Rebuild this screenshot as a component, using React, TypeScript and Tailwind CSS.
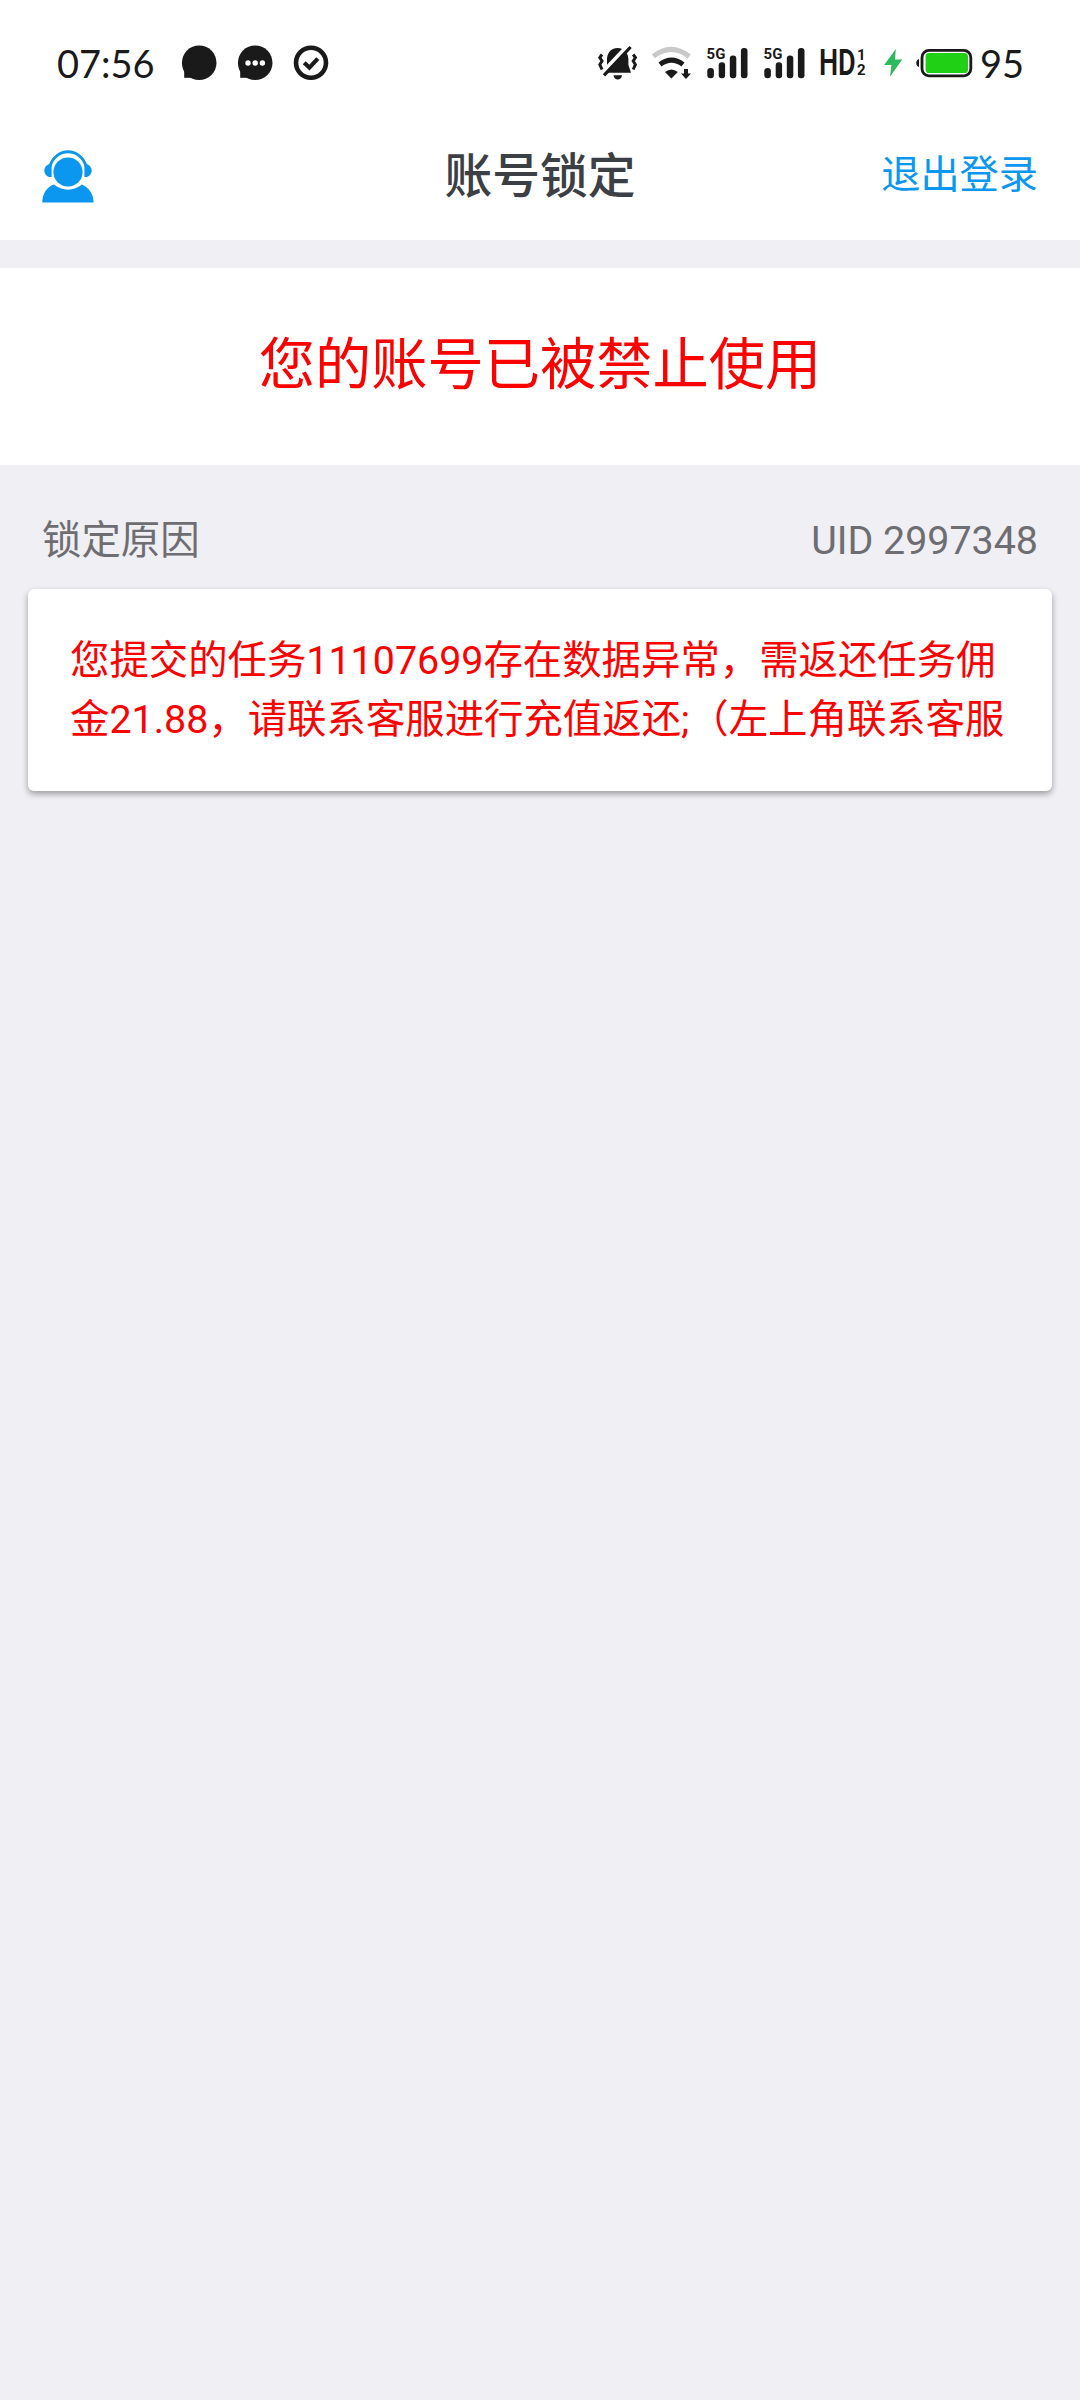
import type { ReactNode } from "react";

interface GlyphProps {
  viewBox: string;
  className: string;
  children: ReactNode;
}

function Glyph({ viewBox, className, children }: GlyphProps) {
  return (
    <svg viewBox={viewBox} className={`shrink-0 ${className}`} fill="#1a1a1a">
      {children}
    </svg>
  );
}

function Bubble() {
  return (
    <>
      <circle cx="18.2" cy="18.8" r="17.3" />
      <rect x="3.2" y="19" width="15" height="14.8" />
    </>
  );
}

function Signal() {
  return (
    <Glyph viewBox="0 0 45 38" className="w-[45px] h-[38px]">
      <text x="1.6" y="15" className="font-[Roboto,sans-serif] text-[15px] font-bold">
        5G
      </text>
      <rect x="2.3" y="24" width="6.6" height="10.3" rx="3.2" />
      <rect x="13.7" y="18.2" width="6.4" height="16.1" rx="3" />
      <rect x="24.8" y="11.4" width="6.5" height="22.9" rx="3" />
      <rect x="35.9" y="4" width="6.6" height="30.3" rx="3" />
    </Glyph>
  );
}

function HdBadge() {
  return (
    <div className="flex w-[49px] items-center font-[Roboto,sans-serif]">
      <div className="w-[38px]">
        <span className="inline-block origin-left scale-x-[0.73] text-[37px] font-semibold leading-[38px]">HD</span>
      </div>
      <div className="flex flex-col text-[15px] font-bold leading-[15px]">
        <span>1</span>
        <span>2</span>
      </div>
    </div>
  );
}

function StatusBar() {
  return (
    <div className="flex h-[126px] items-center justify-between pl-[57px] pr-[56px] font-[Lato,sans-serif] text-[#1a1a1a]">
      <div className="flex items-center">
        <span className="w-[124px] whitespace-nowrap text-[38px] leading-none">07:56</span>
        <div className="flex items-center gap-[18px]">
          <Glyph viewBox="0 0 38 38" className="w-[38px] h-[38px]">
            <Bubble />
          </Glyph>
          <Glyph viewBox="0 0 38 38" className="w-[38px] h-[38px]">
            <Bubble />
            <circle cx="11" cy="19" r="2.7" fill="#fff" />
            <circle cx="18.2" cy="19" r="2.7" fill="#fff" />
            <circle cx="25.4" cy="19" r="2.7" fill="#fff" />
          </Glyph>
          <Glyph viewBox="0 0 38 38" className="w-[38px] h-[38px]">
            <circle cx="18" cy="18.8" r="15" fill="none" stroke="#1a1a1a" strokeWidth="4.6" />
            <path d="M11.2 18.8L16.4 23.6L24.8 14.6" fill="none" stroke="#1a1a1a" strokeWidth="4.2" />
          </Glyph>
        </div>
      </div>

      <div className="flex items-center">
        <div className="flex items-center gap-3">
          <Glyph viewBox="0 0 42 38" className="w-[42px] h-[38px]">
            <path d="M20.6 4C13.6 4 10 9.4 10 15.5V21L7 28.8H34L31.4 21V15.5C31.4 9.4 27.6 4 20.6 4Z" />
            <path d="M16.5 31.2H25C24.4 37 17.1 37 16.5 31.2Z" />
            <path d="M3.4 30.6L31.4 1" stroke="#fff" strokeWidth="4" />
            <path d="M7 31.4L33.6 3" stroke="#1a1a1a" strokeWidth="3.2" />
            <path
              d="M5 10.5L2.8 13.5L5 17L2.8 20.5L5 25.5M36.2 10.5L38.4 13.5L36.2 17L38.4 20.5L36.2 25.5"
              fill="none"
              stroke="#1a1a1a"
              strokeWidth="3"
            />
          </Glyph>
          <Glyph viewBox="0 0 42 38" className="w-[42px] h-[38px]">
            <path d="M2.4 12.4Q20 -1.6 38.2 12.4" fill="none" stroke="#c9c9c9" strokeWidth="5" />
            <path d="M9 20.4Q20.5 11.8 32 20.4" fill="none" stroke="#1a1a1a" strokeWidth="5" />
            <path d="M14 28Q20.5 23 26.8 28L20.4 34.6Z" />
            <path d="M33 25H37V29.6H40L35 35L30 29.6H33Z" />
          </Glyph>
          <Signal />
          <Signal />
          <HdBadge />
        </div>
        <Glyph viewBox="0 0 22 38" className="ml-[14px] w-[22px] h-[38px]">
          <path d="M13.8 5L2.2 21H9.4L8 32.8L20.2 15.4H13Z" fill="#2dbb5e" />
        </Glyph>
        <Glyph viewBox="0 0 59 38" className="ml-[11px] w-[59px] h-[38px]">
          <path d="M4 15V23C0.3 22 0.3 16 4 15Z" />
          <rect x="7" y="6.4" width="48.8" height="25.4" rx="7" fill="none" stroke="#1a1a1a" strokeWidth="2.8" />
          <rect x="10.6" y="9" width="42.4" height="20" rx="3.6" fill="#20d014" />
        </Glyph>
        <span className="ml-[6px] w-[44px] whitespace-nowrap text-[38px] leading-none">95</span>
      </div>
    </div>
  );
}

function SupportIcon() {
  return (
    <svg viewBox="0 0 52 54" className="h-[54px] w-[52px]" fill="#0b96ef">
      <circle cx="26" cy="22" r="14.6" />
      <path d="M0.3 52.4C0.3 44 5 36.8 12 34.6C20 41.4 32 41.4 39.8 34.6C46.4 37.2 51.6 44 51.6 52.4Z" />
      <path d="M8 16C14 -3 38 -3 44 16" fill="none" stroke="#0b96ef" strokeWidth="2.8" />
      <path d="M9.6 12.6V27H7.4C4.6 26.2 2.3 23.6 2.3 20.4C2.3 17.4 4.8 14.8 6.4 14.4Z" />
      <path d="M42.4 12.6V27H44.6C47.4 26.2 49.7 23.6 49.7 20.4C49.7 17.4 47.2 14.8 45.6 14.4Z" />
    </svg>
  );
}

function Header() {
  return (
    <header className="grid h-[114px] grid-cols-3 items-center px-[42px] pb-[13px]">
      <button aria-label="客服" className="justify-self-start">
        <SupportIcon />
      </button>
      <h1 className="justify-self-center pt-0.5 text-[47.8px] font-medium leading-none text-[#3c4045]">
        账号锁定
      </h1>
      <button className="justify-self-end pb-0.5 text-[39.2px] leading-none text-[#0b96ef]">退出登录</button>
    </header>
  );
}

export default function App() {
  return (
    <div className="min-h-[2400px] w-[1080px] bg-[#efeff4] font-[Roboto,'Noto_Sans_CJK_SC',sans-serif]">
      <div className="h-60 bg-white">
        <StatusBar />
        <Header />
      </div>

      <section className="mt-7 flex h-[197px] items-center justify-center bg-white pb-[3px]">
        <p className="text-[56.25px] leading-none text-[#ff0000]">您的账号已被禁止使用</p>
      </section>

      <div className="flex h-[124px] items-center justify-between px-[42px] pt-7 text-[39.4px] leading-none text-[#6d6d72]">
        <span>锁定原因</span>
        <span>UID 2997348</span>
      </div>

      <section className="mx-7 h-[202px] rounded-[6px] bg-white px-[42px] pt-[42px] shadow-[0_3px_6px_rgba(0,0,0,0.35)]">
        <p className="whitespace-nowrap text-[39.4px] leading-[59px] text-[#ff0000]">
          您提交的任务11107699存在数据异常，需返还任务佣
          <br />
          金21.88，请联系客服进行充值返还;（左上角联系客服
        </p>
      </section>
    </div>
  );
}
